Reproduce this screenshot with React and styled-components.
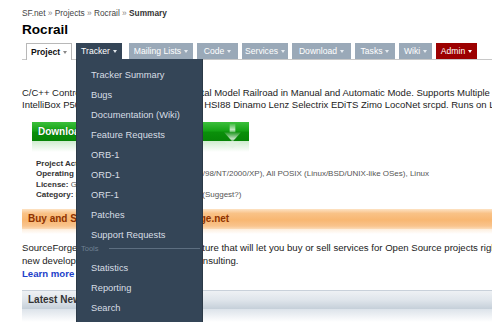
import styled, { createGlobalStyle } from "styled-components";

const GlobalStyle = createGlobalStyle`
  html, body {
    margin: 0;
    padding: 0;
    background: #ffffff;
    overflow: hidden;
  }
  body {
    font-family: "Liberation Sans", Arial, sans-serif;
    color: #222;
  }
`;

// widths taken from the tab strip
const tabs = [
  { label: "Project", kind: "active", w: 46 },
  { label: "Tracker", kind: "open", w: 46 },
  { label: "Mailing Lists", w: 64 },
  { label: "Code", w: 41 },
  { label: "Services", w: 46 },
  { label: "Download", w: 59 },
  { label: "Tasks", w: 40 },
  { label: "Wiki", w: 33 },
  { label: "Admin", kind: "admin", w: 41 },
];

const trackerItems = [
  "Tracker Summary",
  "Bugs",
  "Documentation (Wiki)",
  "Feature Requests",
  "ORB-1",
  "ORD-1",
  "ORF-1",
  "Patches",
  "Support Requests",
];

const toolItems = ["Statistics", "Reporting", "Search"];

const App = () => {
  return (
    <>
      <GlobalStyle />
      <Page>
        <Crumbs>
          SF.net <Sep>»</Sep> Projects <Sep>»</Sep> Rocrail <Sep>»</Sep>{" "}
          <b>Summary</b>
        </Crumbs>
        <Title>Rocrail</Title>

        <TabBar>
          {tabs.map((tab) => (
            <Tab key={tab.label} $kind={tab.kind} $w={tab.w}>
              {tab.label}
              <Caret $kind={tab.kind} />
              {tab.kind === "open" && (
                <Menu>
                  {trackerItems.map((item) => (
                    <MenuItem key={item}>{item}</MenuItem>
                  ))}
                  <MenuGroup>
                    <span>Tools</span>
                    <GroupRule />
                  </MenuGroup>
                  {toolItems.map((item) => (
                    <MenuItem key={item}>{item}</MenuItem>
                  ))}
                </Menu>
              )}
            </Tab>
          ))}
        </TabBar>

        <Description>
          <div>
            C/C++ Control software and server for Digital Model Railroad in
            Manual and Automatic Mode. Supports Multiple Command Stations:
          </div>
          <div>
            IntelliBox P50 P50X Digitrax ECoS Märklin HSI88 Dinamo Lenz
            Selectrix EDiTS Zimo LocoNet srcpd. Runs on Linux, Mac and Windows.
          </div>
        </Description>

        <DownloadWrap>
          <DownloadButton>
            Download Rocrail
            <ArrowIcon viewBox="0 0 18 26">
              <defs>
                <linearGradient id="arr" x1="0" y1="0" x2="0" y2="1">
                  <stop offset="0" stopColor="#ffffff" stopOpacity="0.1" />
                  <stop offset="0.7" stopColor="#ffffff" stopOpacity="0.75" />
                  <stop offset="1" stopColor="#ffffff" stopOpacity="0.3" />
                </linearGradient>
              </defs>
              <rect x="6" y="0" width="6" height="9" fill="url(#arr)" />
              <polygon points="0,9 18,9 9,19" fill="url(#arr)" />
              <polygon points="0,19 18,19 9,26" fill="#e3f2e3" opacity="0.6" />
            </ArrowIcon>
          </DownloadButton>
          <Reflection />
        </DownloadWrap>

        <Info>
          <InfoLine>
            <Label>Project Activity:</Label> <Value>not yet calculated</Value>
          </InfoLine>
          <InfoLine>
            <Label>Operating System:</Label>{" "}
            <Value>
              All 32-bit MS Windows (95/98/NT/2000/XP), All POSIX
              (Linux/BSD/UNIX-like OSes), Linux
            </Value>
          </InfoLine>
          <InfoLine>
            <Label>License:</Label>{" "}
            <Value>GNU General Public License (GPL)</Value>
          </InfoLine>
          <InfoLine>
            <Label>Category:</Label>{" "}
            <Value>Hardware, Front-Ends, Simulations (Suggest?)</Value>
          </InfoLine>
        </Info>

        <OrangeBar>Buy and Sell Services on SourceForge.net</OrangeBar>
        <OrangeFade />

        <Market>
          <div>
            SourceForge.net Marketplace is a new feature that will let you buy
            or sell services for Open Source projects right here on the site,
          </div>
          <div>new development, support, training and consulting.</div>
          <LearnMore href="#">Learn more »</LearnMore>
        </Market>

        <NewsBar>Latest News</NewsBar>
        <NewsShadow />
      </Page>
    </>
  );
};

export default App;

const Page = styled.div`
  padding-left: 22px;
  width: 700px;
`;

const Crumbs = styled.div`
  padding-top: 7px;
  font-size: 8.3px;
  line-height: 12px;
  color: #444;
  white-space: nowrap;

  b {
    color: #333;
  }
`;

const Sep = styled.span`
  color: #888;
`;

const Title = styled.h1`
  margin: 2px 0 0;
  font-size: 13.6px;
  line-height: 18px;
  font-weight: bold;
  color: #000;
`;

const TabBar = styled.div`
  margin-top: 4px;
  height: 16px;
  display: flex;
  align-items: flex-start;
  gap: 4px;
  padding-left: 4px;
  border-bottom: 1px solid #c8c8c8;
`;

const tabColors = {
  active: { bg: "#ffffff", fg: "#111", caret: "#888" },
  open: { bg: "#344557", fg: "#ffffff", caret: "#dfe5ea" },
  admin: { bg: "#9c0000", fg: "#ffffff", caret: "#ffffff" },
  plain: { bg: "#9aa9b8", fg: "#ffffff", caret: "#e6ebf0" },
};

const Tab = styled.div`
  position: relative;
  box-sizing: border-box;
  flex: none;
  width: ${(p) => p.$w}px;
  height: ${(p) => (p.$kind === "active" ? "17px" : "16px")};
  margin-bottom: ${(p) => (p.$kind === "active" ? "-1px" : "0")};
  margin-right: ${(p) => (p.$kind === "open" ? "3px" : "0")};
  display: flex;
  align-items: center;
  justify-content: center;
  gap: 3px;
  font-size: 8.6px;
  font-weight: ${(p) => (p.$kind === "active" ? "bold" : "normal")};
  background: ${(p) => tabColors[p.$kind || "plain"].bg};
  color: ${(p) => tabColors[p.$kind || "plain"].fg};
  border: ${(p) => (p.$kind === "active" ? "1px solid #b8b8b8" : "none")};
  border-bottom: none;
  white-space: nowrap;
`;

const Caret = styled.span`
  flex: none;
  width: 0;
  height: 0;
  margin-top: 1px;
  border-left: 2.5px solid transparent;
  border-right: 2.5px solid transparent;
  border-top: 3px solid ${(p) => tabColors[p.$kind || "plain"].caret};
`;

const Menu = styled.div`
  position: absolute;
  top: 16px;
  left: 0;
  z-index: 10;
  width: 127px;
  box-sizing: border-box;
  padding: 6px 0 4px;
  background: #344557;
  border: 1px solid #2b3947;
  border-top: none;
  font-weight: normal;
`;

const MenuItem = styled.div`
  height: 20px;
  display: flex;
  align-items: center;
  padding-left: 14px;
  font-size: 9.3px;
  color: #d7dee5;
`;

const MenuGroup = styled.div`
  height: 7px;
  padding: 0 2px 6px 4px;
  display: flex;
  align-items: center;
  gap: 10px;
  font-size: 7.5px;
  color: #6f8092;
`;

const GroupRule = styled.div`
  flex: 1;
  height: 1px;
  background: #5d6e80;
`;

const Description = styled.div`
  margin-top: 27px;
  font-size: 9.5px;
  line-height: 12px;
  color: #222;
  white-space: nowrap;
`;

const DownloadWrap = styled.div`
  margin: 11px 0 0 10px;
  width: 217px;
`;

const DownloadButton = styled.div`
  position: relative;
  height: 19px;
  display: flex;
  align-items: center;
  padding-left: 6px;
  font-size: 10px;
  font-weight: bold;
  color: #ffffff;
  text-shadow: 0 0 1px #0a5a0a;
  background: linear-gradient(#3cbf3c 0%, #16a316 45%, #0a8f0a 55%, #078407 100%);
`;

const ArrowIcon = styled.svg`
  position: absolute;
  right: 8px;
  top: 1px;
  width: 17px;
  height: 26px;
`;

const Reflection = styled.div`
  height: 11px;
  background: linear-gradient(#cfeccf, #ffffff);
`;

const Info = styled.div`
  margin-top: 7px;
  padding-left: 14px;
  font-size: 8px;
  line-height: 10.4px;
  white-space: nowrap;
`;

const InfoLine = styled.div``;

const Label = styled.span`
  font-weight: bold;
  color: #333;
`;

const Value = styled.span`
  color: #555;
`;

const OrangeBar = styled.div`
  margin-top: 8px;
  height: 20px;
  display: flex;
  align-items: center;
  padding-left: 6px;
  font-size: 10px;
  font-weight: bold;
  color: #8f3200;
  background: linear-gradient(
    #fde3c4 0%,
    #f9c287 22%,
    #f8b772 55%,
    #f9c48d 85%,
    #fcdcb9 100%
  );
`;

const OrangeFade = styled.div`
  height: 5px;
  background: linear-gradient(#fdeedd, #ffffff);
`;

const Market = styled.div`
  margin-top: 7px;
  font-size: 9.6px;
  line-height: 13px;
  color: #222;
  white-space: nowrap;
`;

const LearnMore = styled.a`
  display: block;
  font-weight: bold;
  color: #1d3fc9;
  text-decoration: none;
`;

const NewsBar = styled.div`
  margin-top: 10px;
  height: 19px;
  box-sizing: border-box;
  display: flex;
  align-items: center;
  padding-left: 6px;
  font-size: 10px;
  font-weight: bold;
  color: #333;
  border-top: 1px solid #c9d1da;
  background: linear-gradient(#eef1f4 0%, #dfe5eb 50%, #c5cfd9 100%);
`;

const NewsShadow = styled.div`
  height: 13px;
  background: linear-gradient(#dce3ea, #ffffff);
`;
